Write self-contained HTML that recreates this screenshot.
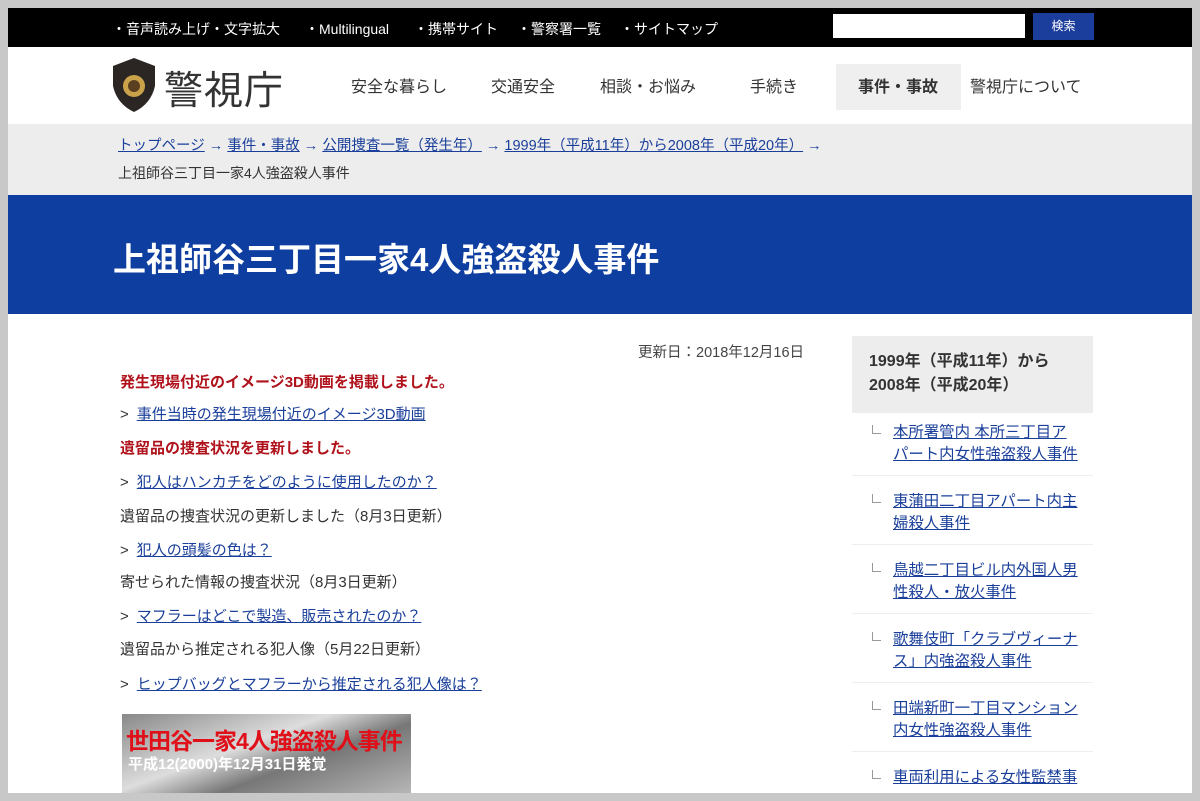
<!DOCTYPE html>
<html><head><meta charset="utf-8"><style>
*{margin:0;padding:0;box-sizing:border-box}
body{width:1200px;height:801px;background:#c8c8c8;position:relative;overflow:hidden;font-family:"Liberation Sans","Noto Sans CJK JP",sans-serif;}
.a{position:absolute;white-space:nowrap}
.frame{position:absolute;left:8px;top:8px;width:1184px;height:785px;background:#fff;overflow:hidden}
a{color:#1a3f9a;text-decoration:underline}
.tl{color:#fff;font-size:14px;top:11px}
.nav{font-size:16px;color:#333}
.bc{font-size:14.5px;color:#1a3f9a}
.l{font-size:15px;color:#333;left:112px}
.red{color:#b0121b;font-weight:bold}
.lk{color:#1a3f9a;text-decoration:underline}
.gt{color:#333;margin-right:8px;text-decoration:none;display:inline-block}
.side{position:absolute;left:844px;width:241px;border-bottom:1px solid #eee;font-size:15.4px;line-height:22px;padding:9px 0 9px 41px;color:#1a3f9a;text-decoration:underline;white-space:nowrap}
.side:before{content:"";position:absolute;left:20px;top:12px;width:8px;height:8px;border-left:1px solid #999;border-bottom:1px solid #999}
</style></head><body>
<div class="frame">
<div class="a" style="left:0;top:0;width:1184px;height:39px;background:#000"></div>
<div class="a tl" style="left:104px">・音声読み上げ・文字拡大</div>
<div class="a tl" style="left:297px">・Multilingual</div>
<div class="a tl" style="left:406px">・携帯サイト</div>
<div class="a tl" style="left:509px">・警察署一覧</div>
<div class="a tl" style="left:612px">・サイトマップ</div>
<div class="a" style="left:825px;top:6px;width:192px;height:24px;background:#fff"></div>
<div class="a" style="left:1025px;top:5px;width:61px;height:27px;background:#1b3d9c;color:#fff;font-size:12px;text-align:center;line-height:27px">検索</div>

<svg class="a" style="left:103px;top:48px" width="46" height="58" viewBox="0 0 46 58"><path d="M23 2 L44 10 L44 30 Q40 48 23 56 Q6 48 2 30 L2 10 Z" fill="#2b2623"/><circle cx="23" cy="30" r="11" fill="#c9a24a"/><circle cx="23" cy="30" r="6" fill="#5a4020"/></svg>
<div class="a" style="left:156px;top:52px;font-size:39px;color:#333;letter-spacing:1px">警視庁</div>
<div class="a nav" style="left:343px;top:65px">安全な暮らし</div>
<div class="a nav" style="left:483px;top:65px">交通安全</div>
<div class="a nav" style="left:592px;top:65px">相談・お悩み</div>
<div class="a nav" style="left:742px;top:65px">手続き</div>
<div class="a" style="left:828px;top:56px;width:125px;height:46px;background:#efefef"></div>
<div class="a nav" style="left:850px;top:65px;font-weight:bold">事件・事故</div>
<div class="a nav" style="left:962px;top:65px">警視庁について</div>

<div class="a" style="left:0;top:116px;width:1184px;height:72px;background:#ededed"></div>
<div class="a bc" style="left:110px;top:126px"><a>トップページ</a> → <a>事件・事故</a> → <a>公開捜査一覧（発生年）</a> → <a>1999年（平成11年）から2008年（平成20年）</a> →</div>
<div class="a" style="left:110px;top:155px;font-size:14px;color:#333">上祖師谷三丁目一家4人強盗殺人事件</div>

<div class="a" style="left:0;top:187px;width:1184px;height:119px;background:#0d3ea0"></div>
<div class="a" style="left:105px;top:225px;font-size:33px;font-weight:bold;color:#fff">上祖師谷三丁目一家4人強盗殺人事件</div>

<div class="a" style="left:630px;top:333px;font-size:14.5px;color:#444">更新日：2018年12月16日</div>
<div class="a l red" style="top:363px">発生現場付近のイメージ3D動画を掲載しました。</div>
<div class="a l" style="top:395px"><span class="gt">&gt;</span><span class="lk">事件当時の発生現場付近のイメージ3D動画</span></div>
<div class="a l red" style="top:429px">遺留品の捜査状況を更新しました。</div>
<div class="a l" style="top:463px"><span class="gt">&gt;</span><span class="lk">犯人はハンカチをどのように使用したのか？</span></div>
<div class="a l" style="top:497px">遺留品の捜査状況の更新しました（8月3日更新）</div>
<div class="a l" style="top:531px"><span class="gt">&gt;</span><span class="lk">犯人の頭髪の色は？</span></div>
<div class="a l" style="top:563px">寄せられた情報の捜査状況（8月3日更新）</div>
<div class="a l" style="top:597px"><span class="gt">&gt;</span><span class="lk">マフラーはどこで製造、販売されたのか？</span></div>
<div class="a l" style="top:630px">遺留品から推定される犯人像（5月22日更新）</div>
<div class="a l" style="top:665px"><span class="gt">&gt;</span><span class="lk">ヒップバッグとマフラーから推定される犯人像は？</span></div>

<div class="a" style="left:114px;top:706px;width:289px;height:85px;background:linear-gradient(160deg,#888,#ddd 40%,#777 60%,#bbb)"></div>
<div class="a" style="left:118px;top:714px;font-size:23px;font-weight:bold;color:#e0101a;letter-spacing:-1px">世田谷一家4人強盗殺人事件</div>
<div class="a" style="left:120px;top:745px;font-size:15px;font-weight:bold;color:#fff">平成12(2000)年12月31日発覚</div>

<div class="a" style="left:844px;top:328px;width:241px;height:77px;background:#ededed;font-size:16px;font-weight:bold;color:#333;line-height:24px;padding:14px 0 0 17px;white-space:normal">1999年（平成11年）から<br>2008年（平成20年）</div>
<div class="side" style="top:405px">本所署管内 本所三丁目ア<br>パート内女性強盗殺人事件</div>
<div class="side" style="top:474px">東蒲田二丁目アパート内主<br>婦殺人事件</div>
<div class="side" style="top:543px">鳥越二丁目ビル内外国人男<br>性殺人・放火事件</div>
<div class="side" style="top:612px">歌舞伎町「クラブヴィーナ<br>ス」内強盗殺人事件</div>
<div class="side" style="top:681px">田端新町一丁目マンション<br>内女性強盗殺人事件</div>
<div class="side" style="top:750px">車両利用による女性監禁事</div>
</div>
</body></html>
